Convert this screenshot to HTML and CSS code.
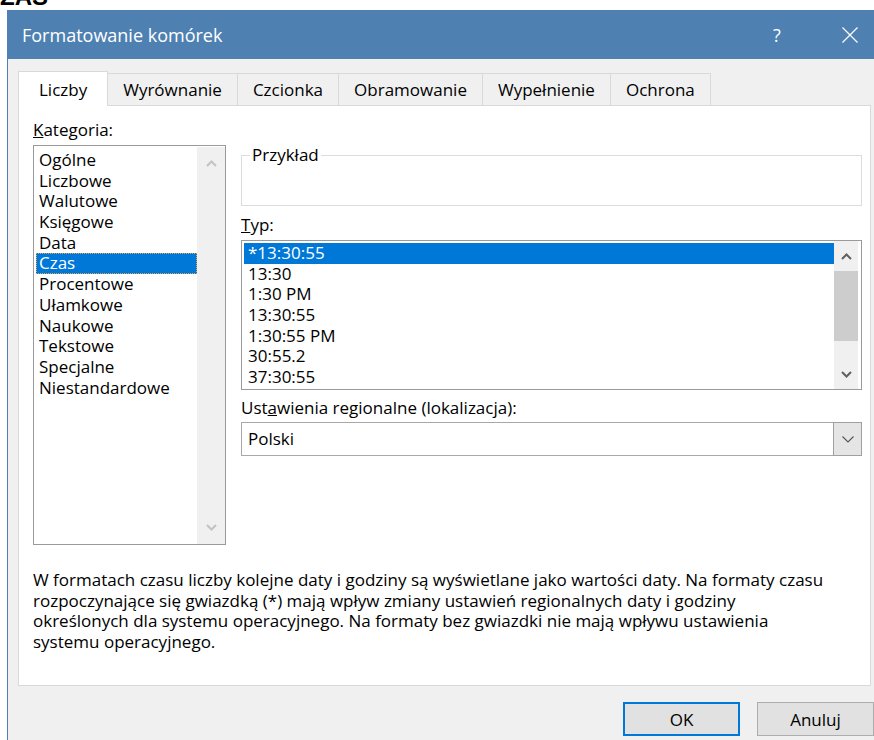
FILE: index.html
```html
<!DOCTYPE html>
<html lang="pl">
<head>
<meta charset="utf-8">
<title>Formatowanie komórek</title>
<link rel="stylesheet" href="styles.css">
</head>
<body>
<div class="page-head"><span>ZAS</span></div>
<div class="window">
  <div class="titlebar">
    <span class="title">Formatowanie komórek</span>
    <span class="tb-help">?</span>
    <span class="tb-close">
      <svg width="16" height="16" viewBox="0 0 16 16"><path d="M0.5 0.5 L15.5 15.5 M15.5 0.5 L0.5 15.5" stroke="#fff" stroke-width="1.2" fill="none"/></svg>
    </span>
  </div>
  <div class="dlg-body">
    <div class="tabs">
      <div class="tab active">Liczby</div>
      <div class="tab">Wyrównanie</div>
      <div class="tab">Czcionka</div>
      <div class="tab">Obramowanie</div>
      <div class="tab">Wypełnienie</div>
      <div class="tab">Ochrona</div>
    </div>
    <div class="panel">
      <div class="col-left">
        <div class="label"><u>K</u>ategoria:</div>
        <div class="listbox cat">
          <ul class="items">
            <li>Ogólne</li>
            <li>Liczbowe</li>
            <li>Walutowe</li>
            <li>Księgowe</li>
            <li>Data</li>
            <li class="sel focus">Czas</li>
            <li>Procentowe</li>
            <li>Ułamkowe</li>
            <li>Naukowe</li>
            <li>Tekstowe</li>
            <li>Specjalne</li>
            <li>Niestandardowe</li>
          </ul>
          <div class="vscroll disabled">
            <span class="arrow"><svg width="11" height="7" viewBox="0 0 11 7"><path d="M1 6 L5.5 1.5 L10 6" stroke="currentColor" stroke-width="2" fill="none"/></svg></span>
            <span class="track"></span>
            <span class="arrow"><svg width="11" height="7" viewBox="0 0 11 7"><path d="M1 1 L5.5 5.5 L10 1" stroke="currentColor" stroke-width="2" fill="none"/></svg></span>
          </div>
        </div>
      </div>
      <div class="col-right">
        <fieldset class="sample">
          <legend>Przykład</legend>
          <div class="sample-value"></div>
        </fieldset>
        <div class="label gap"><u>T</u>yp:</div>
        <div class="listbox types">
          <ul class="items">
            <li class="sel">*13:30:55</li>
            <li>13:30</li>
            <li>1:30 PM</li>
            <li>13:30:55</li>
            <li>1:30:55 PM</li>
            <li>30:55.2</li>
            <li>37:30:55</li>
          </ul>
          <div class="vscroll">
            <span class="arrow"><svg width="11" height="7" viewBox="0 0 11 7"><path d="M1 6 L5.5 1.5 L10 6" stroke="currentColor" stroke-width="2" fill="none"/></svg></span>
            <span class="track"><span class="thumb"></span></span>
            <span class="arrow"><svg width="11" height="7" viewBox="0 0 11 7"><path d="M1 1 L5.5 5.5 L10 1" stroke="currentColor" stroke-width="2" fill="none"/></svg></span>
          </div>
        </div>
        <div class="label gap-sm">Ust<u>a</u>wienia regionalne (lokalizacja):</div>
        <div class="combo">
          <span class="combo-value">Polski</span>
          <span class="combo-btn"><svg width="12" height="7" viewBox="0 0 12 7"><path d="M0.5 0.5 L6 6 L11.5 0.5" stroke="#555" stroke-width="1.1" fill="none"/></svg></span>
        </div>
      </div>
      <p class="desc">W formatach czasu liczby kolejne daty i godziny są wyświetlane jako wartości daty. Na formaty czasu<br>rozpoczynające się gwiazdką (*) mają wpływ zmiany ustawień regionalnych daty i godziny<br>określonych dla systemu operacyjnego. Na formaty bez gwiazdki nie mają wpływu ustawienia<br>systemu operacyjnego.</p>
    </div>
    <div class="buttons">
      <button class="btn default">OK</button>
      <button class="btn">Anuluj</button>
    </div>
  </div>
</div>
</body>
</html>
```
FILE: styles.css
```css
* { box-sizing: border-box; }

html, body {
  margin: 0;
  background: #fff;
  overflow: hidden;
}

body {
  font-family: "Open Sans", "Noto Sans", sans-serif;
  font-size: 17px;
  color: #000;
}

/* clipped heading of the page behind the dialog */
.page-head {
  height: 10px;
  overflow: hidden;
}
.page-head span {
  display: block;
  font: 900 24px/24px "Liberation Sans", sans-serif;
  margin-top: -15px;
}

.window {
  margin-left: 7px;
  width: 877px;
  height: 740px;
  border-left: 1px solid #4e81b2;
  background: #f0f0f0;
}

/* title bar */
.titlebar {
  height: 49px;
  background: #4e81b2;
  color: #fff;
  display: flex;
  align-items: center;
}
.title {
  flex: 1;
  padding-left: 14px;
  font-size: 18px;
}
.tb-help {
  width: 46px;
  text-align: center;
  font-size: 18px;
  margin-right: 22px;
}
.tb-close {
  width: 56px;
  margin-right: 6px;
  display: flex;
  justify-content: center;
}

.dlg-body {
  padding: 12px 10px 0 10px;
}

/* tabs */
.tabs {
  display: flex;
  align-items: flex-end;
  height: 34px;
}
.tab {
  height: 32px;
  line-height: 31px;
  padding: 0 15px;
  border: 1px solid #d9d9d9;
  border-bottom: none;
  margin-left: -1px;
  background: #f0f0f0;
  white-space: nowrap;
}
.tab.active {
  height: 35px;
  margin-bottom: -1px;
  margin-left: 0;
  padding: 2px 20px 0;
  background: #fff;
  position: relative;
  z-index: 1;
}

/* page of the tab control */
.panel {
  margin-right: 3px;
  background: #fff;
  border: 1px solid #d9d9d9;
  display: grid;
  grid-template-columns: 193px 621px;
  column-gap: 15px;
  padding: 0 7px 33px 14px;
}

.label {
  line-height: 20px;
  white-space: nowrap;
}
.col-left .label { margin-top: 14px; }
.label.gap { margin-top: 9px; }
.label.gap-sm { margin-top: 8px; }

/* list boxes */
.listbox {
  border: 1px solid #9a9a9a;
  display: flex;
  background: #fff;
  margin-top: 5px;
}
.listbox.cat { height: 400px; }
.listbox.types { height: 150px; }

.items {
  list-style: none;
  margin: 0;
  flex: 1;
  min-width: 0;
}
.cat .items { padding: 4px 0 0 2px; }
.types .items { padding: 2px 0 0 2px; }

.items li {
  line-height: 20.7px;
  height: 20.7px;
  white-space: nowrap;
}
.cat .items li { padding-left: 3px; }
.types .items li { padding-left: 4px; }

.items li.sel {
  background: #0078d7;
  color: #fff;
}
.items li.focus {
  outline: 1px dotted #e7a34a;
  outline-offset: -1px;
}

.vscroll {
  display: flex;
  flex-direction: column;
  background: #f0f0f0;
  color: #606060;
}
.cat .vscroll { width: 28px; margin-top: 1px; }
.types .vscroll { width: 24px; margin-right: 3px; }
.vscroll.disabled { color: #c3c3c3; }

.arrow {
  height: 30px;
  display: flex;
  align-items: center;
  justify-content: center;
}
.cat .arrow { height: 33px; }
.track {
  flex: 1;
  display: flex;
  flex-direction: column;
}
.thumb {
  height: 70px;
  background: #cdcdcd;
}

/* sample group box */
.sample {
  margin: 39px 0 0;
  padding: 0 8px;
  border: 1px solid #dcdcdc;
  min-width: 0;
}
.sample legend {
  padding: 0 2px;
  line-height: 20px;
}
.sample-value { height: 40px; }

/* locale combo box */
.combo {
  margin-top: 4px;
  height: 34px;
  border: 1px solid #a8a8a8;
  display: flex;
  align-items: stretch;
}
.combo-value {
  flex: 1;
  padding-left: 6px;
  line-height: 32px;
}
.combo-btn {
  width: 29px;
  margin: -1px -1px -1px 0;
  border: 1px solid #a0a0a0;
  background: #e5e5e5;
  display: flex;
  align-items: center;
  justify-content: center;
}

/* explanation under the lists */
.desc {
  grid-column: 1 / 3;
  margin: 25px 0 0;
  line-height: 20.6px;
  white-space: nowrap;
}

/* dialog buttons */
.buttons {
  display: flex;
  justify-content: flex-end;
  gap: 17px;
  margin-top: 16px;
}
.btn {
  width: 117px;
  height: 34px;
  font: inherit;
  color: #000;
  background: #e1e1e1;
  border: 1px solid #adadad;
  padding: 0;
}
.btn.default {
  border: 2px solid #0078d7;
}
```
